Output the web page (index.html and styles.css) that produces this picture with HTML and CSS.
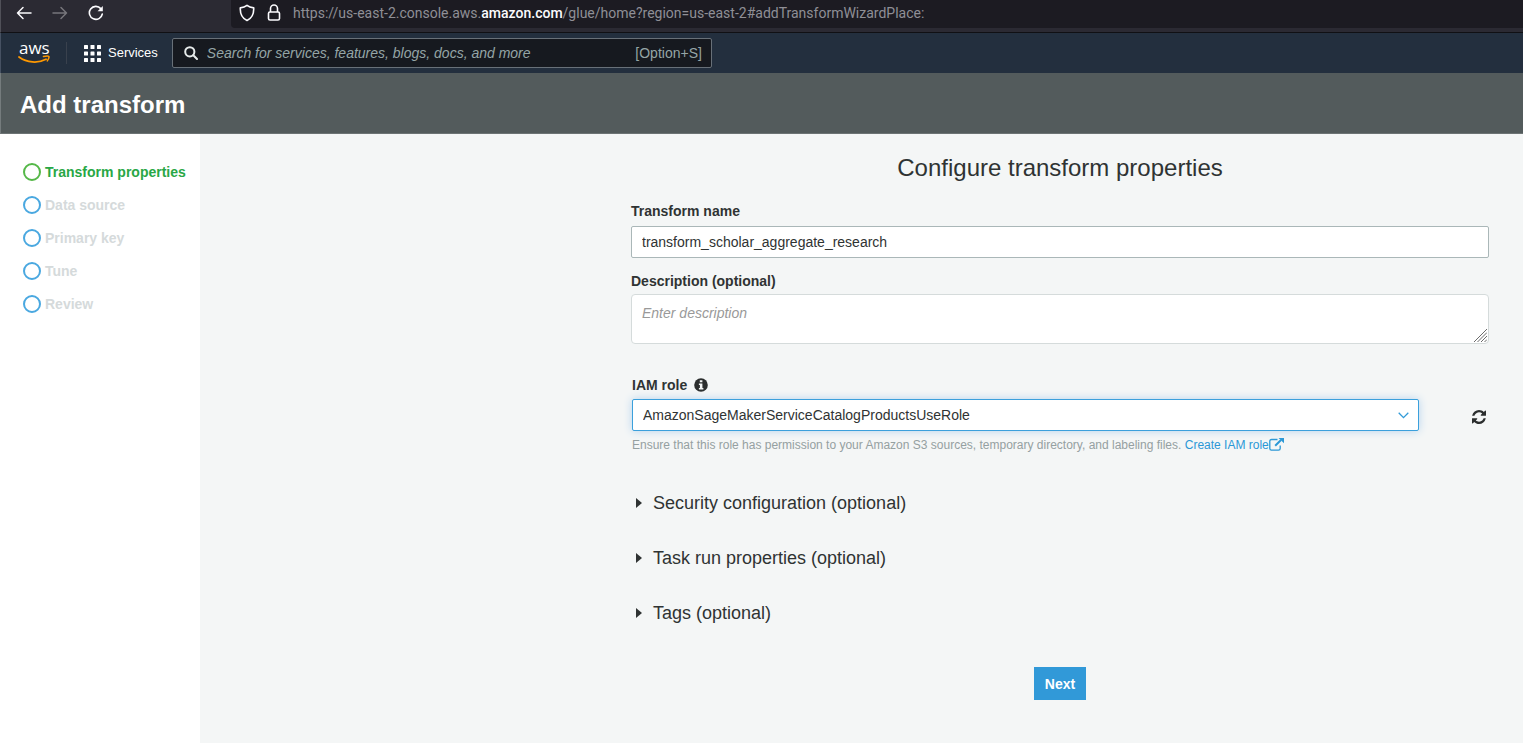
FILE: index.html
```html
<!DOCTYPE html>
<html lang="en">
<head>
<meta charset="utf-8">
<meta name="viewport" content="width=device-width, initial-scale=1">
<title>Add transform</title>
<link rel="stylesheet" href="styles.css">
</head>
<body>
<div class="browser-bar">
  <div class="browser-controls">
    <button class="browser-button" type="button" aria-label="Back">
      <svg width="16" height="14" viewBox="0 0 16 14" fill="none" stroke="#fbfbfe" stroke-width="1.5" stroke-linecap="round" stroke-linejoin="round"><path d="M15 7H1.5M7 1.5L1.5 7L7 12.500"/></svg>
    </button>
    <button class="browser-button" type="button" aria-label="Forward" disabled>
      <svg width="16" height="14" viewBox="0 0 16 14" fill="none" stroke="#77767c" stroke-width="1.500" stroke-linecap="round" stroke-linejoin="round"><path d="M1 7H14.500M9 1.500L14.500 7L9 12.500"/></svg>
    </button>
    <button class="browser-button" type="button" aria-label="Reload">
      <svg width="16" height="16" viewBox="0 0 16 16" fill="none"><path d="M12.800 3.600A6.500 6.500 0 1 0 14.300 9" stroke="#fbfbfe" stroke-width="1.600" stroke-linecap="round"/><path d="M14.800 1V6.200H9.600Z" fill="#fbfbfe"/></svg>
    </button>
  </div>
  <div class="address">
    <svg width="16" height="18" viewBox="0 0 16 18" fill="none" stroke="#fbfbfe" stroke-width="1.600" stroke-linejoin="round"><path d="M8 1.300C6.300 2.700 3.900 3.600 1.300 3.900C1 9.800 3.600 14.500 8 16.500C12.400 14.500 15 9.800 14.700 3.900C12.100 3.600 9.700 2.700 8 1.300Z"/></svg>
    <svg width="14" height="18" viewBox="0 0 14 18" fill="none" stroke="#fbfbfe" stroke-width="1.600" stroke-linejoin="round"><rect x="1.500" y="8" width="11" height="8" rx="1.500"/><path d="M3.500 8V4.500A3.500 3.500 0 0 1 10.500 4.500V8"/></svg>
    <span class="url">https://us-east-2.console.aws.<span class="url-domain">amazon.com</span>/glue/home?region=us-east-2#addTransformWizardPlace:</span>
  </div>
</div>

<header class="nav">
  <a class="logo" href="#" aria-label="aws home">
    <span class="logo-text">aws</span>
    <svg class="logo-smile" width="32" height="9" viewBox="0 0 32 9" fill="none"><path d="M1 2C9 7.900 20 8.600 28 4.300" stroke="#ff9900" stroke-width="1.800" stroke-linecap="round"/><path d="M25.500 1.500C28 .9 30.300.8 30.800 1.400C31.200 2.200 30.300 4.600 29.300 5.900" stroke="#ff9900" stroke-width="1.500" stroke-linecap="round"/></svg>
  </a>
  <button class="services" type="button">
    <svg width="17" height="17" viewBox="0 0 17 17" fill="#fff"><rect width="4" height="4" rx=".6"/><rect x="6.500" width="4" height="4" rx=".6"/><rect x="13" width="4" height="4" rx=".6"/><rect y="6.500" width="4" height="4" rx=".6"/><rect x="6.500" y="6.500" width="4" height="4" rx=".6"/><rect x="13" y="6.500" width="4" height="4" rx=".6"/><rect y="13" width="4" height="4" rx=".6"/><rect x="6.500" y="13" width="4" height="4" rx=".6"/><rect x="13" y="13" width="4" height="4" rx=".6"/></svg>
    Services
  </button>
  <label class="search">
    <svg width="14" height="14" viewBox="0 0 14 14" fill="none" stroke="#e6eaea" stroke-width="2" stroke-linecap="round"><circle cx="5.800" cy="5.800" r="4.600"/><path d="M9.300 9.300L13 13"/></svg>
    <input class="search-input" type="search" aria-label="Search" placeholder="Search for services, features, blogs, docs, and more">
    <span>[Option+S]</span>
  </label>
</header>

<div class="page-header"><h1 class="page-title">Add transform</h1></div>

<div class="layout">
  <nav class="steps" aria-label="Steps">
    <a class="step step-active" href="#"><span class="step-dot"></span>Transform properties</a>
    <a class="step" href="#"><span class="step-dot"></span>Data source</a>
    <a class="step" href="#"><span class="step-dot"></span>Primary key</a>
    <a class="step" href="#"><span class="step-dot"></span>Tune</a>
    <a class="step" href="#"><span class="step-dot"></span>Review</a>
  </nav>
  <main class="main">
    <form class="form">
      <h2 class="form-title">Configure transform properties</h2>
      <div class="field">
        <label class="label" for="name">Transform name</label>
        <input class="input" id="name" type="text" value="transform_scholar_aggregate_research">
      </div>
      <div class="field field-description">
        <label class="label" for="description">Description (optional)</label>
        <div class="textarea-wrap">
          <textarea class="textarea" id="description" placeholder="Enter description"></textarea>
          <svg class="grip" width="13" height="13" viewBox="0 0 13 13" stroke="#6b6b6b" stroke-width="1"><path d="M0 13L13 0M3.500 13L13 3.500M7 13L13 7M10.500 13L13 10.500"/></svg>
        </div>
      </div>
      <div class="role">
        <div class="role-heading">
          <label class="label" for="role">IAM role</label>
          <svg width="14" height="14" viewBox="0 0 14 14"><circle cx="7" cy="7" r="6.800" fill="#2b2e2e"/><path d="M5.800 2.300H8.400V4.300H5.800ZM4.900 5.400H8.400V9.900H9.400V11.400H4.900V9.900H5.900V6.900H4.900Z" fill="#f4f6f6"/></svg>
        </div>
        <div class="role-row">
          <div class="select-wrap">
            <select class="select" id="role"><option>AmazonSageMakerServiceCatalogProductsUseRole</option></select>
            <svg class="chevron" width="11" height="7" viewBox="0 0 11 7" fill="none" stroke="#319bd8" stroke-width="1.300"><path d="M.7.8L5.500 5.600L10.300.8"/></svg>
          </div>
          <button class="refresh" type="button" aria-label="Refresh roles">
            <svg width="14" height="14" viewBox="0 0 1536 1536" fill="#2b2e2e"><path d="M1511 928q0 5-1 7-64 268-268 434.500T764 1536q-146 0-282.500-55T238 1324l-129 129q-19 19-45 19t-45-19-19-45V960q0-26 19-45t45-19h448q26 0 45 19t19 45-19 45l-137 137q71 66 161 102t187 36q134 0 250-65t186-179q11-17 53-117 8-23 30-23h192q13 0 22.500 9.500t9.500 22.500zm25-800v448q0 26-19 45t-45 19h-448q-26 0-45-19t-19-45 19-45l138-138Q969 256 768 256q-134 0-250 65T332 500q-11 17-53 117-8 23-30 23H50q-13 0-22.500-9.500T18 608v-7q65-268 270-434.500T768 0q146 0 284 55.500T1297 212l130-129q19-19 45-19t45 19 19 45z"/></svg>
          </button>
        </div>
        <p class="hint">Ensure that this role has permission to your Amazon S3 sources, temporary directory, and labeling files. <a class="link" href="#">Create IAM role<svg class="external" width="15" height="13" viewBox="0 0 15 13" fill="none" stroke="#2b98d6" stroke-width="1.300"><path d="M8.500 1.500H2.500Q.8 1.500.8 3.200V10.500Q.8 12.200 2.500 12.200H9.500Q11.200 12.200 11.200 10.500V7.500"/><path d="M6.200 7.700L12 2" stroke-width="2"/><path d="M9.500 0H15V5.200Z" fill="#2b98d6" stroke="none"/></svg></a></p>
      </div>
      <div class="sections">
        <details><summary class="summary">Security configuration (optional)</summary></details>
        <details><summary class="summary">Task run properties (optional)</summary></details>
        <details><summary class="summary">Tags (optional)</summary></details>
      </div>
      <button class="next" type="button">Next</button>
    </form>
  </main>
</div>
</body>
</html>
```
FILE: styles.css
```css
* { box-sizing: border-box; }

body {
  margin: 0;
  min-height: 100vh;
  display: flex;
  flex-direction: column;
  font-family: "Liberation Sans", Arial, sans-serif;
  font-size: 14px;
  line-height: 20px;
  color: #2f3333;
  background: #f4f6f6;
}

button, input, textarea, select { font: inherit; color: inherit; }
button { border: 0; padding: 0; background: none; cursor: pointer; }
a { text-decoration: none; }
svg { display: block; flex: none; }

.browser-bar {
  display: flex;
  height: 33px;
  padding-bottom: 4px;
  background: #2b2a33;
  border-bottom: 1px solid #101014;
  border-left: 1px solid #505058;
}
.browser-controls {
  display: flex;
  align-items: center;
  gap: 20px;
  width: 230px;
  padding-left: 15px;
  padding-bottom: 2px;
}
.browser-button { display: flex; }
.address {
  flex: 1;
  display: flex;
  align-items: center;
  gap: 12px;
  padding-left: 8px;
  padding-bottom: 3px;
  background: #1c1b22;
  border-bottom-left-radius: 4px;
}
.url {
  font-family: Roboto, "Liberation Sans", sans-serif;
  color: #8f8f96;
  white-space: nowrap;
}
.url-domain { color: #fbfbfe; font-weight: 500; }

.nav {
  display: flex;
  align-items: center;
  height: 40px;
  background: #232f3e;
  border-left: 1px solid #465162;
}
.logo {
  width: 66px;
  height: 22px;
  padding-left: 17px;
  border-right: 1px solid #39414d;
}
.logo-text {
  display: block;
  height: 13px;
  margin-left: 1px;
  font-family: "Open Sans", sans-serif;
  font-size: 17px;
  line-height: 12px;
  font-weight: 500;
  color: #fff;
}
.services {
  display: flex;
  align-items: center;
  gap: 7px;
  margin-left: 17px;
  color: #fff;
  font-size: 13px;
}
.search {
  display: flex;
  align-items: center;
  width: 540px;
  height: 30px;
  margin-left: 14px;
  padding: 0 9px 0 11px;
  gap: 9px;
  color: #95a5a6;
  background: #16191f;
  border: 1px solid #687078;
  border-radius: 2px;
}
.search-input {
  flex: 1;
  min-width: 0;
  padding: 0;
  border: 0;
  outline: 0;
  background: none;
}
.search-input::placeholder { color: #95a5a6; font-style: italic; }

.page-header {
  padding: 18px 19px 14px;
  background: #535b5c;
  border-left: 1px solid #757c7d;
  border-bottom: 1px solid #6c7374;
}
.page-title {
  margin: 0;
  font-size: 24px;
  line-height: 28px;
  color: #fff;
}

.layout { flex: 1; display: flex; }
.steps {
  width: 200px;
  padding: 21px 0 0 23px;
  background: #fff;
}
.step {
  display: flex;
  align-items: center;
  gap: 4px;
  height: 33px;
  color: #d5dadb;
  font-weight: 700;
  white-space: nowrap;
}
.step-dot {
  width: 18px;
  height: 18px;
  border: 2px solid #4aa8e0;
  border-radius: 50%;
}
.step-active { color: #28a745; }
.step-active .step-dot { border-color: #55b848; }

.main {
  flex: 1;
  display: grid;
  grid-template-columns: 1fr 2fr;
  column-gap: 2px;
  padding: 18px 34px 40px 0;
}
.form {
  grid-column: 2;
  display: flex;
  flex-direction: column;
}
.form-title {
  margin: 0 0 17px;
  font-size: 24px;
  line-height: 32px;
  font-weight: 400;
  text-align: center;
}
.field { display: flex; flex-direction: column; margin-bottom: 13px; }
.label { font-weight: 700; }
.input {
  height: 32px;
  margin-top: 5px;
  padding: 0 10px;
  border: 1px solid #aab7b8;
  border-radius: 2px;
  background: #fff;
}
.textarea-wrap { position: relative; margin-top: 3px; }
.textarea {
  display: block;
  width: 100%;
  height: 50px;
  padding: 8px 10px;
  border: 1px solid #d5dbdb;
  border-radius: 4px;
  background: #fff;
  resize: none;
}
.textarea::placeholder { color: #999; font-style: italic; }
.grip { position: absolute; right: 2px; bottom: 2px; }
.field-description { margin-bottom: 31px; }

.role { padding-left: 1px; }
.role-heading { display: flex; align-items: center; gap: 7px; }
.role-row { display: flex; margin-top: 4px; }
.select-wrap { position: relative; flex: 1; }
.select {
  display: block;
  width: 100%;
  height: 32px;
  padding: 0 10px;
  appearance: none;
  border: 1px solid #3ba0dc;
  border-radius: 2px;
  background: #fff;
  box-shadow: 0 0 8px #b5d3ee;
}
.chevron { position: absolute; right: 10px; top: 13px; pointer-events: none; }
.refresh {
  display: flex;
  justify-content: flex-end;
  align-items: center;
  width: 70px;
  padding: 4px 3px 0 0;
}
.hint {
  margin: 4px 0 0;
  font-size: 12px;
  color: #95a0a1;
}
.link { color: #2b98d6; }
.external { display: inline-block; vertical-align: -2px; }

.sections {
  display: flex;
  flex-direction: column;
  gap: 31px;
  margin-top: 36px;
}
.summary {
  display: flex;
  align-items: center;
  gap: 11px;
  padding-left: 5px;
  font-size: 18px;
  line-height: 24px;
  list-style: none;
  cursor: pointer;
}
.summary::before {
  content: "";
  border-left: 6px solid #2f3333;
  border-top: 5px solid transparent;
  border-bottom: 5px solid transparent;
}
.next {
  align-self: center;
  height: 33px;
  margin-top: 42px;
  padding: 0 11px;
  background: #3199d8;
  color: #fff;
  font-weight: 700;
}
```
